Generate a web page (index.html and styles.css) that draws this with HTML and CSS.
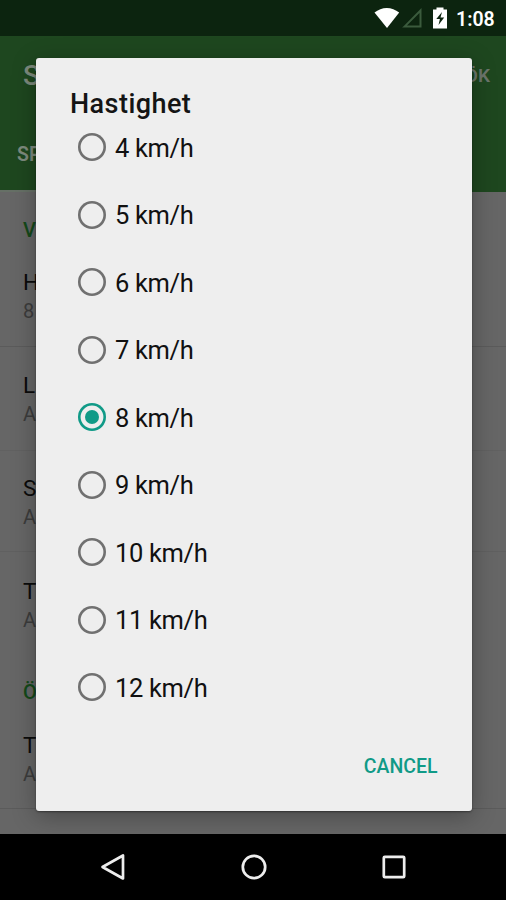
FILE: index.html
```html
<!DOCTYPE html>
<html lang="sv">
<head>
<meta charset="utf-8">
<title>Hastighet</title>
<link rel="stylesheet" href="styles.css">
</head>
<body>
<div class="phone">
  <header class="status">
    <svg class="status-icons" width="110" height="36" viewBox="0 0 110 36">
      <path d="M1.500 12.600C8.500 6.300 19 6.300 26.200 12.600L14 28Z" fill="#fff"/>
      <path d="M31.500 26.600L47.500 10.500V26.600Z" fill="none" stroke="#3b5b3d" stroke-width="2"/>
      <path d="M60 9.500H63.500V7.500H70.500V9.500H74V28.500H60Z" fill="#fff"/>
      <path d="M69 12L63.300 19H66.900L65.500 25L71.200 17.400H67.500Z" fill="#0c240f"/>
    </svg>
    <span class="clock">1:08</span>
  </header>
  <section class="appbar">
    <div class="toolbar"><span class="app-title">S</span><span class="action">ÖK</span></div>
    <div class="tab">SP</div>
    <div class="indicator"></div>
  </section>
  <main class="settings">
    <h2 class="section first">V</h2>
    <div class="item one"><p class="name">H</p><p class="value">8</p></div>
    <div class="item two"><p class="name">L</p><p class="value">A</p></div>
    <div class="item three"><p class="name">S</p><p class="value">A</p></div>
    <div class="item four"><p class="name">T</p><p class="value">A</p></div>
    <h2 class="section second">Ö</h2>
    <div class="item five"><p class="name">T</p><p class="value">A</p></div>
  </main>
  <nav class="navbar">
    <svg width="30" height="30" viewBox="0 0 30 30"><path d="M4.500 15L25 3.500V26.500Z"/></svg>
    <svg width="30" height="30" viewBox="0 0 30 30"><circle cx="15" cy="15" r="11.200"/></svg>
    <svg width="30" height="30" viewBox="0 0 30 30"><rect x="4.800" y="4.800" width="20.400" height="20.400" rx="1"/></svg>
  </nav>
  <div class="dialog" role="dialog">
    <h1 class="dialog-title">Hastighet</h1>
    <ul class="options">
      <li><span class="radio"></span>4 km/h</li>
      <li><span class="radio"></span>5 km/h</li>
      <li><span class="radio"></span>6 km/h</li>
      <li><span class="radio"></span>7 km/h</li>
      <li><span class="radio checked"></span>8 km/h</li>
      <li><span class="radio"></span>9 km/h</li>
      <li><span class="radio"></span>10 km/h</li>
      <li><span class="radio"></span>11 km/h</li>
      <li><span class="radio"></span>12 km/h</li>
    </ul>
    <div class="actions"><button class="cancel">CANCEL</button></div>
  </div>
</div>
</body>
</html>
```

FILE: styles.css
```css
* { box-sizing: border-box; margin: 0; padding: 0; }
body { font-family: Roboto, "Liberation Sans", sans-serif; }
.phone {
  position: relative;
  display: flex;
  flex-direction: column;
  width: 506px;
  height: 900px;
  overflow: hidden;
  background: #666;
}
.status {
  display: flex;
  justify-content: flex-end;
  height: 36px;
  padding-right: 11px;
  background: #0c240f;
}
.clock {
  width: 39px;
  margin-left: -1px;
  color: #fff;
  font-size: 19.5px;
  font-weight: 600;
  line-height: 39px;
  white-space: nowrap;
}
.status-icons { margin-right: -26px; flex: none; }
.appbar { height: 156px; background: #1e471f; color: #7d8a7d; }
.toolbar {
  display: flex;
  justify-content: space-between;
  height: 80px;
  padding: 0 16px 0 23px;
  line-height: 80px;
}
.app-title { font-size: 28px; font-weight: 500; }
.action { color: #6c756c; font-size: 19px; font-weight: 600; }
.tab { height: 74px; padding-left: 17px; font-size: 19.5px; font-weight: 600; line-height: 78px; }
.indicator { width: 50%; height: 2px; background: #667066; }
.settings { height: 642px; color: #0b0b0b; }
.section { padding-left: 23px; color: #14491a; font-size: 20px; font-weight: 500; line-height: 24px; }
.first { height: 74px; padding-top: 26px; }
.item { padding-left: 23px; border-bottom: 1px solid #5b5b5b; }
.name { font-size: 22.5px; line-height: 30px; }
.value { color: #3c3c3c; font-size: 20px; line-height: 28px; }
.one { height: 81px; }
.one .name { padding-top: 1px; }
.two { height: 104px; padding-top: 23px; border-color: #616161; }
.three { height: 101px; padding-top: 22px; border-color: #606060; }
.four { height: 90px; padding-top: 24px; border: 0; }
.second { height: 88px; padding-top: 38px; }
.five { height: 79px; }
.navbar {
  display: flex;
  justify-content: center;
  align-items: center;
  gap: 110.5px;
  height: 66px;
  padding-left: 1px;
  background: #000;
}
.navbar svg { fill: none; stroke: #ededed; stroke-width: 2.7; stroke-linejoin: round; }
.dialog {
  position: absolute;
  top: 58px;
  left: 36px;
  width: 435.5px;
  height: 752.5px;
  background: #eee;
  border-radius: 3px;
  box-shadow: 0 1px 2px rgba(0,0,0,.4), 0 5px 24px rgba(0,0,0,.3);
}
.dialog-title {
  height: 56px;
  padding: 29px 0 0 34px;
  color: #141414;
  font-size: 27px;
  font-weight: 500;
  letter-spacing: .45px;
  line-height: 34px;
}
.options {
  height: 607.5px;
  list-style: none;
  color: #111;
  font-size: 25.5px;
  letter-spacing: -.33px;
}
.options li { display: flex; align-items: center; height: 67.5px; padding-left: 42px; }
.radio {
  display: flex;
  align-items: center;
  justify-content: center;
  width: 28px;
  height: 28px;
  margin: 0 9px 1.5px 0;
  box-shadow: inset 0 0 0 2.6px #707070;
  border-radius: 50%;
}
.checked { box-shadow: inset 0 0 0 2.6px #109a87; }
.checked::before { content: ""; width: 14px; height: 14px; border-radius: 50%; background: #109a87; }
.actions { display: flex; justify-content: flex-end; padding: 32px 34px 0 0; }
.cancel {
  border: 0;
  background: none;
  color: #109a87;
  font: 500 19.5px/26px Roboto, sans-serif;
}
```
